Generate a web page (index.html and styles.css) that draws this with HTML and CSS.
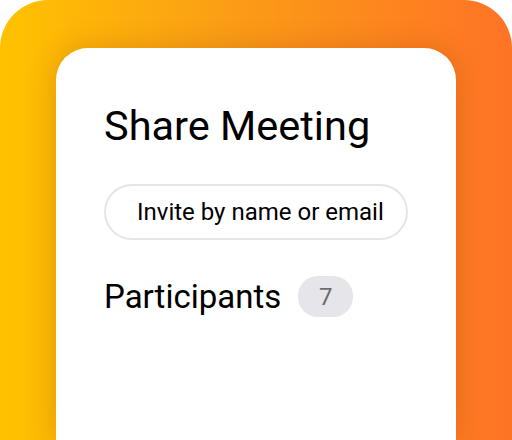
FILE: index.html
```html
<!DOCTYPE html>
<html>
<head>
<meta charset="utf-8">
<link rel="stylesheet" href="styles.css">
</head>
<body>
<div class="frame">
  <div class="card">
    <h1 class="title">Share Meeting</h1>
    <div class="invite">Invite by name or email</div>
    <div class="participants">
      <span class="label">Participants</span>
      <span class="badge">7</span>
    </div>
  </div>
</div>
</body>
</html>
```

FILE: styles.css
```css
html, body {
  margin: 0;
  padding: 0;
  background: #ffffff;
}
body {
  width: 512px;
  height: 440px;
  overflow: hidden;
  font-family: Roboto, "Liberation Sans", sans-serif;
}
.frame {
  width: 512px;
  height: 440px;
  box-sizing: border-box;
  padding: 48px 56px 0 56px;
  border-radius: 48px 48px 0 0;
  background: linear-gradient(90deg, #ffc200 0%, #fb9d16 45%, #ff7325 100%);
  display: flex;
  overflow: hidden;
}
.card {
  flex: 1;
  min-width: 0;
  background: #ffffff;
  border-radius: 32px 32px 0 0;
  padding: 56px 48px 0 48px;
  box-shadow: 0 0 28px rgba(120, 40, 0, 0.22);
  display: flex;
  flex-direction: column;
  align-items: flex-start;
}
.title {
  margin: 0;
  font-size: 41.5px;
  font-weight: 400;
  line-height: 44px;
  color: #000000;
}
.invite {
  margin-top: 36px;
  height: 56px;
  box-sizing: border-box;
  border: 2px solid #e5e5e5;
  border-radius: 28px;
  padding: 0 22px 0 31px;
  display: flex;
  align-items: center;
  font-size: 24px;
  white-space: nowrap;
  color: #000000;
}
.participants {
  margin-top: 36px;
  display: flex;
  align-items: center;
  gap: 17px;
}
.label {
  font-size: 33px;
  color: #000000;
}
.badge {
  width: 55px;
  height: 41px;
  border-radius: 20px;
  background: #e5e5ea;
  color: #6b6b70;
  font-size: 24px;
  display: flex;
  align-items: center;
  justify-content: center;
}
```
